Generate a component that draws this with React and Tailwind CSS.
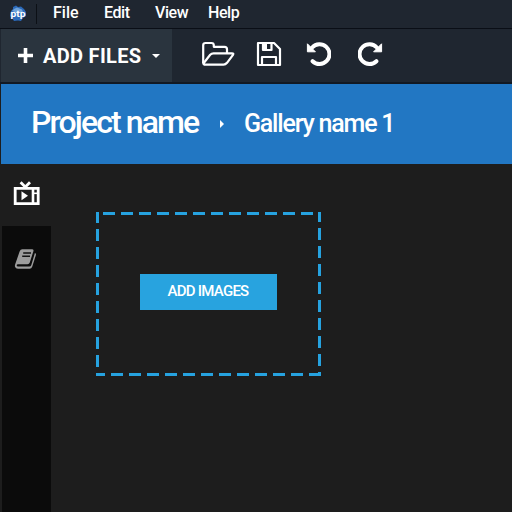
import React from "react";

const Logo = () => (
  <svg className="block h-[18px] w-[18px]" viewBox="0 0 18 18">
    <path d="M2 6L4 4L4 2L7 0.5L9 2L12 1.5L15 4L17 7L17 11L14 13L12 16L9 15.5L5 16L3 13L1 11Z" fill="#2b69b9" />
    <path d="M3 6L5 4L8 2.5L13 4.5L14 7L8 8Z" fill="#6fa3da" />
    <text x="9" y="11.5" textAnchor="middle" fill="white" fontFamily="Roboto, sans-serif" fontWeight="700" fontSize="9" textLength="15" lengthAdjust="spacingAndGlyphs">ptp</text>
  </svg>
);

const FolderIcon = () => (
  <svg className="block h-[27px] w-[34px]" viewBox="0 0 34 27" fill="none" stroke="white" strokeWidth="2.2" strokeLinejoin="round">
    <path d="M2.2 22V4.3Q2.2 2 4.5 2H10.5Q12.8 2 12.8 4.3V5.8H23.5Q26 5.8 26 8.3V12" />
    <path d="M2.4 22.5L9.2 13.8Q10.6 12.3 12.5 12.3H31Q33 12.3 32 13.8L26 21.8Q24.5 23.7 22.5 23.7H4.5Q2.2 23.7 2.2 21.4Z" />
  </svg>
);

const SaveIcon = () => (
  <svg className="block h-[26px] w-[26px]" viewBox="0 0 26 26" fill="none" stroke="white" strokeWidth="2.2" strokeLinejoin="round">
    <path d="M2 2H18L24 8V24H2Z" />
    <path d="M6 24V16H20V24M7 2V9H15.5V2" />
    <path d="M7 2H11V9H7Z" fill="white" stroke="none" />
  </svg>
);

const RotateIcon = ({ className }) => (
  <svg className={className} viewBox="0 0 26 26">
    <path d="M7.2 6.5A9.9 9.9 0 1 1 7.6 20.2" fill="none" stroke="white" strokeWidth="4" strokeLinecap="round" />
    <path d="M2.4 2.8V10.8H10.4Z" fill="white" stroke="white" strokeWidth="1" strokeLinejoin="round" />
  </svg>
);

const TvIcon = () => (
  <svg className="block h-[25px] w-[27px]" viewBox="0 0 27 25" fill="none" stroke="white">
    <path d="M2.2 7.3H25.2V22.6H2.2Z" strokeWidth="2.8" />
    <path d="M20 6V23" strokeWidth="2.6" />
    <path d="M7.6 1.2L12.3 6L17 1.2" strokeWidth="2.8" />
    <path d="M8.5 10.2L15 14.7L8.5 19.2Z" fill="white" stroke="none" />
    <path d="M21 12.3h4" strokeWidth="1.6" />
  </svg>
);

const BookIcon = () => (
  <svg className="block h-[22px] w-[23px]" viewBox="0 0 23 22">
    <path d="M8.3 1.2H18Q20 1.2 19.4 3.2L15.8 14.5Q15.2 16.2 13.5 16.2H4Q2.5 16.4 2.7 17.6Q2.9 18.5 4 18.5H15.3Q16.8 18.5 17.3 17L20.9 5Q22.3 5.4 21.9 7L18.3 18.6Q17.6 20.8 15.5 20.8H4Q1.6 20.8 1 18.7Q.7 17.5 1.2 16.3L5.6 3.5Q6.4 1.2 8.3 1.2Z" fill="#9c9c9c" />
    <path d="M9.2 5H17M8.2 8.3H16" stroke="#111" strokeWidth="1.5" />
  </svg>
);

const DashedFrame = () => (
  <svg className="absolute inset-0 block h-[164px] w-[225px]" viewBox="0 0 225 164" stroke="#26a2df" strokeWidth="3" strokeDasharray="12 6">
    <path d="M7 1.5H222" />
    <path d="M1.5 17V157" />
    <path d="M1.5 0V11" />
    <path d="M223.5 16V157" />
    <path d="M223.5 0V10M223.5 160V164" />
    <path d="M15 162.5H225" />
    <path d="M0 162.5H9" />
  </svg>
);

export default function App() {
  return (
    <div className="flex h-[512px] w-[512px] flex-col overflow-hidden bg-[#1d1d1d] font-['Roboto',sans-serif] text-white">
      <nav className="flex h-7 shrink-0 items-center bg-[#1f2630] text-[16px] leading-6 font-medium">
        <div className="ml-[9px] w-[27px]"><Logo /></div>
        <div className="h-[20px] w-px bg-[#0c1016]" />
        <span className="-mt-[2px] ml-4 w-[51px]">File</span>
        <span className="-mt-[2px] w-[51px] tracking-[-0.4px]">Edit</span>
        <span className="-mt-[2px] w-[53px] tracking-[-0.4px]">View</span>
        <span className="-mt-[2px] tracking-[-0.4px]">Help</span>
      </nav>
      <div className="flex h-14 shrink-0 border-t border-b-2 border-t-[#0a0e16] border-b-[#121923] bg-[#1f2630]">
        <button className="flex w-[172px] items-center border-l border-[#1f2630] bg-[#2a343e]">
          <svg className="ml-[17px] h-[15px] w-[15px]" viewBox="0 0 15 15" stroke="white" strokeWidth="3.6"><path d="M0 7.5H15M7.5 0V15" /></svg>
          <span className="ml-[10px] w-[98px] text-left text-[20px] leading-6 font-bold whitespace-nowrap tracking-[0.3px]">ADD FILES</span>
          <svg className="ml-[11px] h-1 w-2" viewBox="0 0 8 4"><path d="M0 0H8L4 4Z" fill="white" /></svg>
        </button>
        <div className="flex items-start pt-[12px] pl-[29px]">
          <FolderIcon />
          <div className="ml-[21px]"><SaveIcon /></div>
          <RotateIcon className="ml-[23px] block h-[26px] w-[26px]" />
          <RotateIcon className="ml-[27px] block h-[26px] w-[26px] -scale-x-100" />
        </div>
      </div>
      <header className="ml-px flex h-20 shrink-0 items-center bg-[#2277c3] pl-[30px] font-medium whitespace-nowrap">
        <h1 className="-mt-[5px] w-[189px] text-[32px] leading-10 tracking-[-1.9px]">Project name</h1>
        <svg className="h-2 w-1" viewBox="0 0 4 8"><path d="M0 0V8L4 4Z" fill="white" /></svg>
        <h2 className="-mt-px ml-5 text-[25px] leading-8 tracking-[-1.2px]">Gallery name 1</h2>
      </header>
      <main className="flex flex-1">
        <aside className="flex w-[51px] flex-col pl-[2px]">
          <div className="flex h-[62px] items-start pt-[17px] pl-[11px]"><TvIcon /></div>
          <div className="flex-1 bg-[#0b0b0b] pt-[22px] pl-3"><BookIcon /></div>
        </aside>
        <section className="pt-12 pl-[45px]">
          <div className="relative flex h-[164px] w-[225px] items-start justify-center pt-[62px]">
            <DashedFrame />
            <button className="mr-px h-9 w-[137px] bg-[#28a3df] pb-[2px] text-[15px] leading-5 font-medium tracking-[-0.75px]">ADD IMAGES</button>
          </div>
        </section>
      </main>
    </div>
  );
}
